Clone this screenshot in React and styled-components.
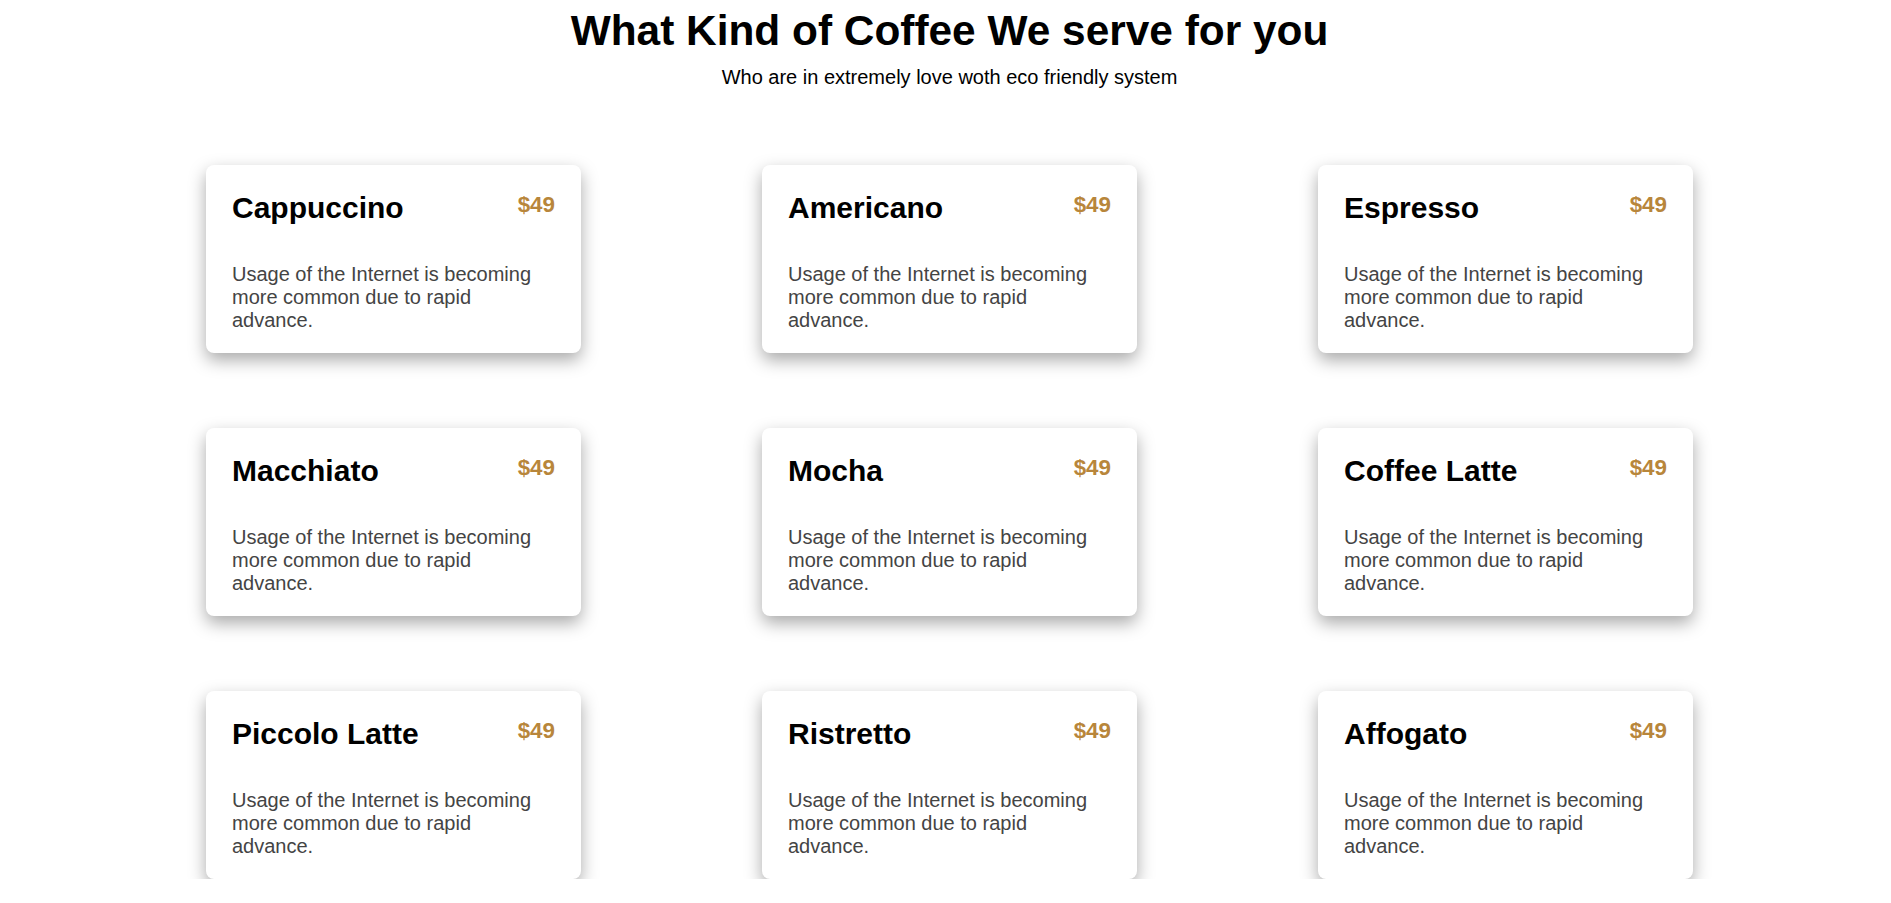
import React from 'react';
import styled, {createGlobalStyle} from 'styled-components';

const coffees = [
  'Cappuccino',
  'Americano',
  'Espresso',
  'Macchiato',
  'Mocha',
  'Coffee Latte',
  'Piccolo Latte',
  'Ristretto',
  'Affogato',
];

const GlobalStyle = createGlobalStyle`
  html, body {
    margin: 0;
    padding: 0;
    background: #ffffff;
  }
  body {
    font-family: "Liberation Sans", Arial, sans-serif;
    color: #000;
  }
`;

const Page = styled.main`
  padding: 7px 0 0 8px;
  display: flex;
  flex-direction: column;
  align-items: center;
`;

const Heading = styled.h1`
  margin: 0;
  font-size: 42.4px;
  font-weight: 700;
  line-height: normal;
  text-align: center;
`;

const Subheading = styled.p`
  margin: 11px 0 0;
  font-size: 20px;
  line-height: normal;
  text-align: center;
`;

const MenuGrid = styled.section`
  margin-top: 76px;
  display: grid;
  grid-template-columns: repeat(3, 375px);
  column-gap: 181px;
  row-gap: 75px;
`;

const Card = styled.article`
  box-sizing: border-box;
  height: 188px;
  padding: 26px 26px 24px 26px;
  background: #ffffff;
  border-radius: 8px;
  box-shadow: 0 7px 17px rgba(0, 0, 0, 0.34);
`;

const CardHead = styled.div`
  display: flex;
  justify-content: space-between;
  align-items: flex-start;
`;

const Name = styled.h2`
  margin: 0;
  font-size: 30px;
  font-weight: 700;
  line-height: normal;
`;

const Price = styled.span`
  margin-top: 1px;
  font-size: 22.4px;
  font-weight: 700;
  line-height: normal;
  color: #b8863b;
`;

const Description = styled.p`
  margin: 38px 0 0;
  max-width: 312px;
  font-size: 20px;
  line-height: normal;
  color: #444444;
`;

function CoffeeCard({name, price}) {
  return (
    <Card>
      <CardHead>
        <Name>{name}</Name>
        <Price>{price}</Price>
      </CardHead>
      <Description>
        Usage of the Internet is becoming more common due to rapid advance.
      </Description>
    </Card>
  );
}

export default function App() {
  return (
    <>
      <GlobalStyle/>
      <Page>
        <Heading>What Kind of Coffee We serve for you</Heading>
        <Subheading>Who are in extremely love woth eco friendly system</Subheading>
        <MenuGrid>
          {coffees.map((name) => (
            <CoffeeCard key={name} name={name} price="$49"/>
          ))}
        </MenuGrid>
      </Page>
    </>
  );
}
